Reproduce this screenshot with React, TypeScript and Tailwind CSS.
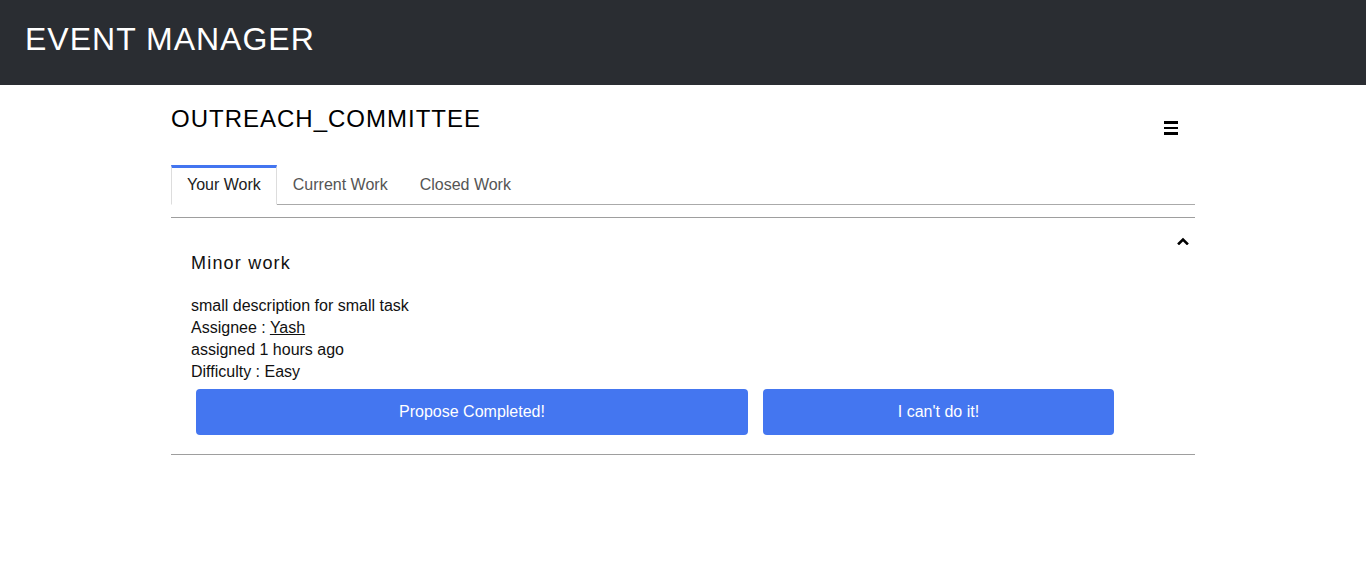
import React from "react";

export default function App() {
  const font = { fontFamily: '"Liberation Sans", Arial, sans-serif' };
  return (
    <div className="min-h-[577px] bg-white text-[#111]" style={font}>
      <header className="h-[85px] bg-[#2a2d32] flex items-center pl-[25px] pb-2">
        <h1 className="text-[32px] leading-none tracking-[1px] text-white font-normal">EVENT MANAGER</h1>
      </header>
      <main className="w-[1024px] mx-auto">
        <div className="flex justify-between items-start pt-[20px]">
          <h2 className="text-[24px] leading-[28px] tracking-[1px] text-black font-normal">OUTREACH_COMMITTEE</h2>
          <button className="mt-[16px] mr-[17px] flex flex-col gap-[3px] w-[14px]">
            <span className="block h-[2.5px] w-[14px] bg-black" />
            <span className="block h-[2.5px] w-[14px] bg-black" />
            <span className="block h-[2.5px] w-[14px] bg-black" />
          </button>
        </div>
        <ul className="flex mt-[30px] border-b border-[#aaa] text-[16px] leading-[20px]">
          <li className="-mb-px border-t-[3px] border-t-[#4375f0] border-x border-x-[#ddd] border-b border-b-white bg-white px-[15px] pt-[7px] pb-[9px] text-[#222]">Your Work</li>
          <li className="-mb-px border-t-[3px] border-t-transparent border-x border-x-transparent border-b border-b-transparent px-[15px] pt-[7px] pb-[9px] text-[#555]">Current Work</li>
          <li className="-mb-px border-t-[3px] border-t-transparent border-x border-x-transparent border-b border-b-transparent px-[15px] pt-[7px] pb-[9px] text-[#555]">Closed Work</li>
        </ul>
        <section className="mt-[12px] border-y border-[#9e9e9e] pl-[20px] pr-[6px] pb-[19px]">
          <div className="flex justify-between items-start pt-[19px]">
            <h3 className="mt-[15px] text-[18px] leading-[22px] tracking-[1.2px] font-normal text-[#111]">Minor work</h3>
            <svg width="12" height="8" viewBox="0 0 12 8" className="block">
              <path d="M2 6.5 L6 2.5 L10 6.5" fill="none" stroke="#000" strokeWidth="2.6" strokeLinecap="square" />
            </svg>
          </div>
          <div className="mt-[21px] text-[16px] leading-[22px] text-[#111]">
            <p>small description for small task</p>
            <p>
              Assignee : <a className="underline text-[#111]">Yash</a>
            </p>
            <p>assigned 1 hours ago</p>
            <p>Difficulty : Easy</p>
          </div>
          <div className="flex mt-[6px] ml-[5px] gap-[15px]">
            <button className="w-[552px] h-[46px] rounded-[4px] bg-[#4476f0] text-white text-[16px]">Propose Completed!</button>
            <button className="w-[351px] h-[46px] rounded-[4px] bg-[#4476f0] text-white text-[16px]">I can't do it!</button>
          </div>
        </section>
      </main>
    </div>
  );
}
